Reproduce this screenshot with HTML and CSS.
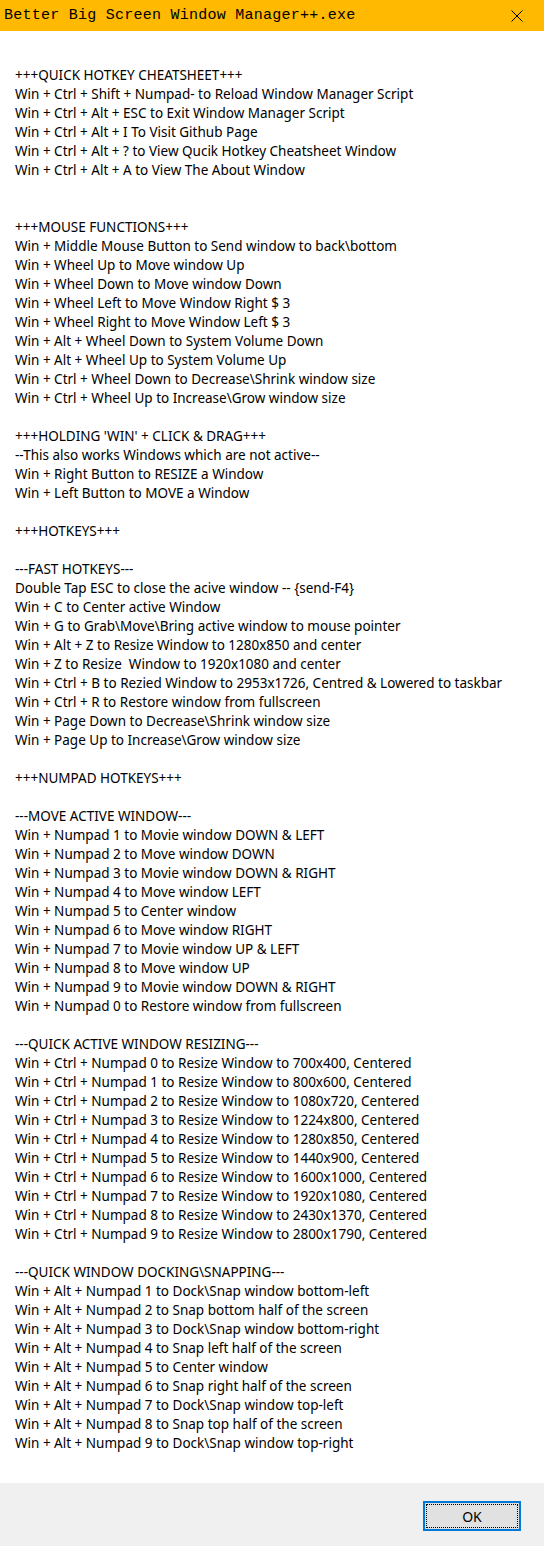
FILE: index.html
```html
<!DOCTYPE html>
<html>
<head>
<meta charset="utf-8">
<link rel="stylesheet" href="styles.css">
</head>
<body>
<div class="window">
  <div class="titlebar">
    <span class="title">Better Big Screen Window Manager++.exe</span>
    <svg class="close" width="12" height="12" viewBox="0 0 12 12"><path d="M0.5 0.5L11.5 11.5M11.5 0.5L0.5 11.5" stroke="#000" stroke-width="1"/></svg>
  </div>
  <div class="content"><div class="text">+++QUICK HOTKEY CHEATSHEET+++
Win + Ctrl + Shift + Numpad- to Reload Window Manager Script
Win + Ctrl + Alt + ESC to Exit Window Manager Script
Win + Ctrl + Alt + I To Visit Github Page
Win + Ctrl + Alt + ? to View Qucik Hotkey Cheatsheet Window
Win + Ctrl + Alt + A to View The About Window


+++MOUSE FUNCTIONS+++
Win + Middle Mouse Button to Send window to back\bottom
Win + Wheel Up to Move window Up
Win + Wheel Down to Move window Down
Win + Wheel Left to Move Window Right $ 3
Win + Wheel Right to Move Window Left $ 3
Win + Alt + Wheel Down to System Volume Down
Win + Alt + Wheel Up to System Volume Up
Win + Ctrl + Wheel Down to Decrease\Shrink window size
Win + Ctrl + Wheel Up to Increase\Grow window size

+++HOLDING 'WIN' + CLICK &amp; DRAG+++
--This also works Windows which are not active--
Win + Right Button to RESIZE a Window
Win + Left Button to MOVE a Window

+++HOTKEYS+++

---FAST HOTKEYS---
Double Tap ESC to close the acive window -- {send-F4}
Win + C to Center active Window
Win + G to Grab\Move\Bring active window to mouse pointer
Win + Alt + Z to Resize Window to 1280x850 and center
Win + Z to Resize  Window to 1920x1080 and center
Win + Ctrl + B to Rezied Window to 2953x1726, Centred &amp; Lowered to taskbar
Win + Ctrl + R to Restore window from fullscreen
Win + Page Down to Decrease\Shrink window size
Win + Page Up to Increase\Grow window size

+++NUMPAD HOTKEYS+++

---MOVE ACTIVE WINDOW---
Win + Numpad 1 to Movie window DOWN &amp; LEFT
Win + Numpad 2 to Move window DOWN
Win + Numpad 3 to Movie window DOWN &amp; RIGHT
Win + Numpad 4 to Move window LEFT
Win + Numpad 5 to Center window
Win + Numpad 6 to Move window RIGHT
Win + Numpad 7 to Movie window UP &amp; LEFT
Win + Numpad 8 to Move window UP
Win + Numpad 9 to Movie window DOWN &amp; RIGHT
Win + Numpad 0 to Restore window from fullscreen

---QUICK ACTIVE WINDOW RESIZING---
Win + Ctrl + Numpad 0 to Resize Window to 700x400, Centered
Win + Ctrl + Numpad 1 to Resize Window to 800x600, Centered
Win + Ctrl + Numpad 2 to Resize Window to 1080x720, Centered
Win + Ctrl + Numpad 3 to Resize Window to 1224x800, Centered
Win + Ctrl + Numpad 4 to Resize Window to 1280x850, Centered
Win + Ctrl + Numpad 5 to Resize Window to 1440x900, Centered
Win + Ctrl + Numpad 6 to Resize Window to 1600x1000, Centered
Win + Ctrl + Numpad 7 to Resize Window to 1920x1080, Centered
Win + Ctrl + Numpad 8 to Resize Window to 2430x1370, Centered
Win + Ctrl + Numpad 9 to Resize Window to 2800x1790, Centered

---QUICK WINDOW DOCKING\SNAPPING---
Win + Alt + Numpad 1 to Dock\Snap window bottom-left
Win + Alt + Numpad 2 to Snap bottom half of the screen
Win + Alt + Numpad 3 to Dock\Snap window bottom-right
Win + Alt + Numpad 4 to Snap left half of the screen
Win + Alt + Numpad 5 to Center window
Win + Alt + Numpad 6 to Snap right half of the screen
Win + Alt + Numpad 7 to Dock\Snap window top-left
Win + Alt + Numpad 8 to Snap top half of the screen
Win + Alt + Numpad 9 to Dock\Snap window top-right</div></div>
  <div class="footer">
    <button class="ok"><span class="ok-inner">OK</span></button>
  </div>
</div>
</body>
</html>
```
FILE: styles.css
```css
html, body {
  margin: 0;
  padding: 0;
  background: #ffffff;
}
.window {
  width: 544px;
  height: 1546px;
  display: flex;
  flex-direction: column;
  font-family: "Noto Sans", "Open Sans", sans-serif;
}
.titlebar {
  height: 31px;
  background: #ffb900;
  display: flex;
  align-items: center;
  justify-content: space-between;
  padding: 0 21px 0 4px;
  box-sizing: border-box;
}
.title {
  font-family: "Liberation Mono", "DejaVu Sans Mono", monospace;
  font-size: 15px;
  color: #000;
  letter-spacing: 0.25px;
}
.close {
  display: block;
}
.content {
  flex: 1;
  background: #fff;
  padding: 35px 0 0 15px;
  box-sizing: border-box;
}
.text {
  white-space: pre;
  font-size: 13.5px;
  line-height: 19px;
  color: #000;
}
.footer {
  height: 63px;
  background: #f0f0f0;
  display: flex;
  justify-content: flex-end;
  align-items: flex-start;
  padding: 18px 23px 0 0;
  box-sizing: border-box;
}
.ok {
  width: 98px;
  height: 30px;
  border: 2px solid #0078d7;
  background: #e1e1e1;
  padding: 1px;
  box-sizing: border-box;
  margin: 0;
  font: inherit;
}
.ok-inner {
  display: flex;
  align-items: center;
  justify-content: center;
  height: 100%;
  border: 1px dotted #000;
  box-sizing: border-box;
  font-size: 14px;
  color: #000;
}
```
